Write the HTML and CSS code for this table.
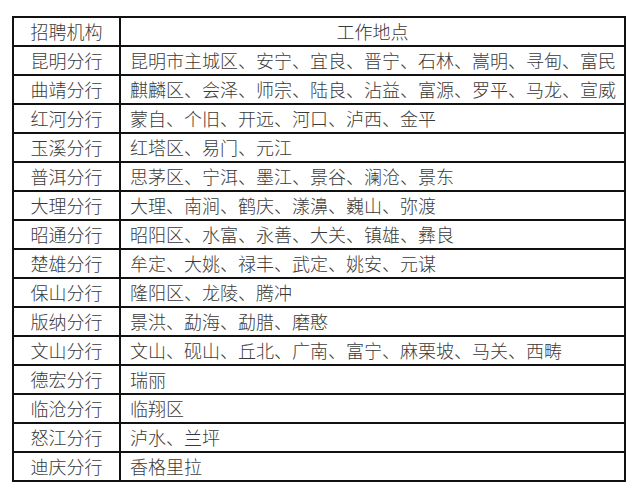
FILE: index.html
```html
<!DOCTYPE html>
<html lang="zh-CN">
<head>
<meta charset="utf-8">
<link rel="stylesheet" href="styles.css">
</head>
<body>
<table class="branches">
<colgroup><col class="c1"><col class="c2"></colgroup>
<tr><th>招聘机构</th><th>工作地点</th></tr>
<tr><td>昆明分行</td><td>昆明市主城区、安宁、宜良、晋宁、石林、嵩明、寻甸、富民</td></tr>
<tr><td>曲靖分行</td><td>麒麟区、会泽、师宗、陆良、沾益、富源、罗平、马龙、宣威</td></tr>
<tr><td>红河分行</td><td>蒙自、个旧、开远、河口、泸西、金平</td></tr>
<tr><td>玉溪分行</td><td>红塔区、易门、元江</td></tr>
<tr><td>普洱分行</td><td>思茅区、宁洱、墨江、景谷、澜沧、景东</td></tr>
<tr><td>大理分行</td><td>大理、南涧、鹤庆、漾濞、巍山、弥渡</td></tr>
<tr><td>昭通分行</td><td>昭阳区、水富、永善、大关、镇雄、彝良</td></tr>
<tr><td>楚雄分行</td><td>牟定、大姚、禄丰、武定、姚安、元谋</td></tr>
<tr><td>保山分行</td><td>隆阳区、龙陵、腾冲</td></tr>
<tr><td>版纳分行</td><td>景洪、勐海、勐腊、磨憨</td></tr>
<tr><td>文山分行</td><td>文山、砚山、丘北、广南、富宁、麻栗坡、马关、西畴</td></tr>
<tr><td>德宏分行</td><td>瑞丽</td></tr>
<tr><td>临沧分行</td><td>临翔区</td></tr>
<tr><td>怒江分行</td><td>泸水、兰坪</td></tr>
<tr><td>迪庆分行</td><td>香格里拉</td></tr>
</table>
</body>
</html>
```
FILE: styles.css
```css
html, body {
  margin: 0;
  padding: 0;
  background: #fff;
}
body {
  padding: 16px 0 0 12px;
  font-family: "Noto Sans CJK SC", "Noto Sans CJK JP", sans-serif;
  color: #3a3a3a;
}
.branches {
  border-collapse: collapse;
  width: 612px;
  table-layout: fixed;
}
.c1 { width: 107px; }
.c2 { width: 505px; }
.branches th,
.branches td {
  border: 2px solid #111;
  height: 27px;
  padding: 0;
  font-size: 18px;
  font-weight: 300;
  line-height: 27px;
  white-space: nowrap;
  overflow: hidden;
}
.branches th {
  text-align: center;
  font-weight: 300;
}
.branches td:first-child {
  text-align: center;
}
.branches td + td {
  text-align: left;
  padding-left: 9px;
}
```
